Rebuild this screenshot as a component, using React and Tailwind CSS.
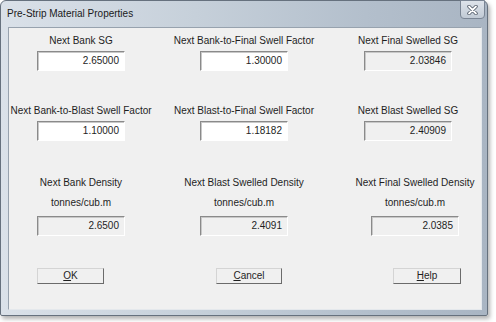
import React from 'react';

const fields = [
  [
    { label: 'Next Bank SG', value: '2.65000', editable: true },
    { label: 'Next Bank-to-Final Swell Factor', value: '1.30000', editable: true },
    { label: 'Next Final Swelled SG', value: '2.03846' },
  ],
  [
    { label: 'Next Bank-to-Blast Swell Factor', value: '1.10000', editable: true },
    { label: 'Next Blast-to-Final Swell Factor', value: '1.18182', editable: true },
    { label: 'Next Blast Swelled SG', value: '2.40909' },
  ],
];

const densities = [
  { label: 'Next Bank Density', value: '2.6500' },
  { label: 'Next Blast Swelled Density', value: '2.4091' },
  { label: 'Next Final Swelled Density', value: '2.0385' },
];

const colWidths = ['w-[144px]', 'w-[182px]', 'w-[146px]'];

const Field = ({ value, editable }) => (
  <div
    className={`w-[88px] h-[20px] flex items-center justify-end pr-[5px] border border-t-[#8a8a8a] border-l-[#8a8a8a] border-r-white border-b-white shadow-[inset_1px_1px_0_#c8c8c8] ${
      editable ? 'bg-white' : 'bg-[#f0f0f0]'
    }`}
  >
    {value}
  </div>
);

const Button = ({ className, children }) => (
  <div
    className={`h-[16px] flex items-center justify-center bg-[#f0f0f0] border border-t-[#d4d4d4] border-l-[#d4d4d4] border-r-[#6b6b6b] border-b-[#6b6b6b] ${className}`}
  >
    {children}
  </div>
);

const App = () => {
  return (
    <div className="w-[496px] h-[322px] bg-white font-['Liberation_Sans',Arial,sans-serif] text-[10px] leading-[12px] text-[#1e1e1e]">
      <div className="w-[488px] h-[316px] rounded-t-[6px] rounded-b-[2px] border border-[#66717e] bg-[linear-gradient(90deg,#dae1e9_0%,#c6d0da_40%,#b3bfcc_75%,#a9b5c3_100%)] shadow-[2px_3px_4px_rgba(0,0,0,0.3)] flex flex-col">
        {/* Title bar */}
        <div className="h-[26px] flex justify-between pl-[6px] pr-[2px]">
          <div className="pt-[7px] text-[#1a1a1a]">Pre-Strip Material Properties</div>
          <div className="w-[25px] h-[19px] mt-[-1px] rounded-b-[4px] border border-[#7a8594] bg-[linear-gradient(180deg,#dde3ea,#c1cad5)] flex items-center justify-center">
            <svg width="11" height="10" viewBox="0 0 11 10">
              <path d="M2 1.5 L9 8.5 M9 1.5 L2 8.5" stroke="#4b5563" strokeWidth="3.4" strokeLinecap="round" />
              <path d="M2 1.5 L9 8.5 M9 1.5 L2 8.5" stroke="#ffffff" strokeWidth="1.8" strokeLinecap="round" />
            </svg>
          </div>
        </div>

        {/* Client area */}
        <div className="ml-[7px] w-[474px] h-[283px] bg-[#f0f0f0] border border-t-[#97a2ae] border-l-[#97a2ae] border-r-[#e4e8ec] border-b-[#e4e8ec] pt-[7px] flex flex-col">
          {fields.map((row, r) => (
            <div key={r} className={`flex ${r === 1 ? 'mt-[34px]' : ''}`}>
              {row.map((f, i) => (
                <div key={f.label} className={`${colWidths[i]} flex flex-col items-center`}>
                  <div className="h-[12px] whitespace-nowrap">{f.label}</div>
                  <div className="mt-[4px]">
                    <Field value={f.value} editable={f.editable} />
                  </div>
                </div>
              ))}
            </div>
          ))}

          <div className="flex mt-[36px]">
            {densities.map((d, i) => (
              <div key={d.label} className={`${colWidths[i]} flex flex-col items-center ${i === 2 ? 'pl-[14px]' : ''}`}>
                <div className="h-[12px] whitespace-nowrap">{d.label}</div>
                <div className="h-[12px] mt-[8px]">tonnes/cub.m</div>
                <div className="mt-[7px]">
                  <Field value={d.value} />
                </div>
              </div>
            ))}
          </div>

          <div className="flex mt-[32px]">
            <Button className="ml-[28px] w-[67px]">
              <span><span className="underline">O</span>K</span>
            </Button>
            <Button className="ml-[112px] w-[66px]">
              <span><span className="underline">C</span>ancel</span>
            </Button>
            <Button className="ml-[111px] w-[68px]">
              <span><span className="underline">H</span>elp</span>
            </Button>
          </div>
        </div>
      </div>
    </div>
  );
};

export default App;
